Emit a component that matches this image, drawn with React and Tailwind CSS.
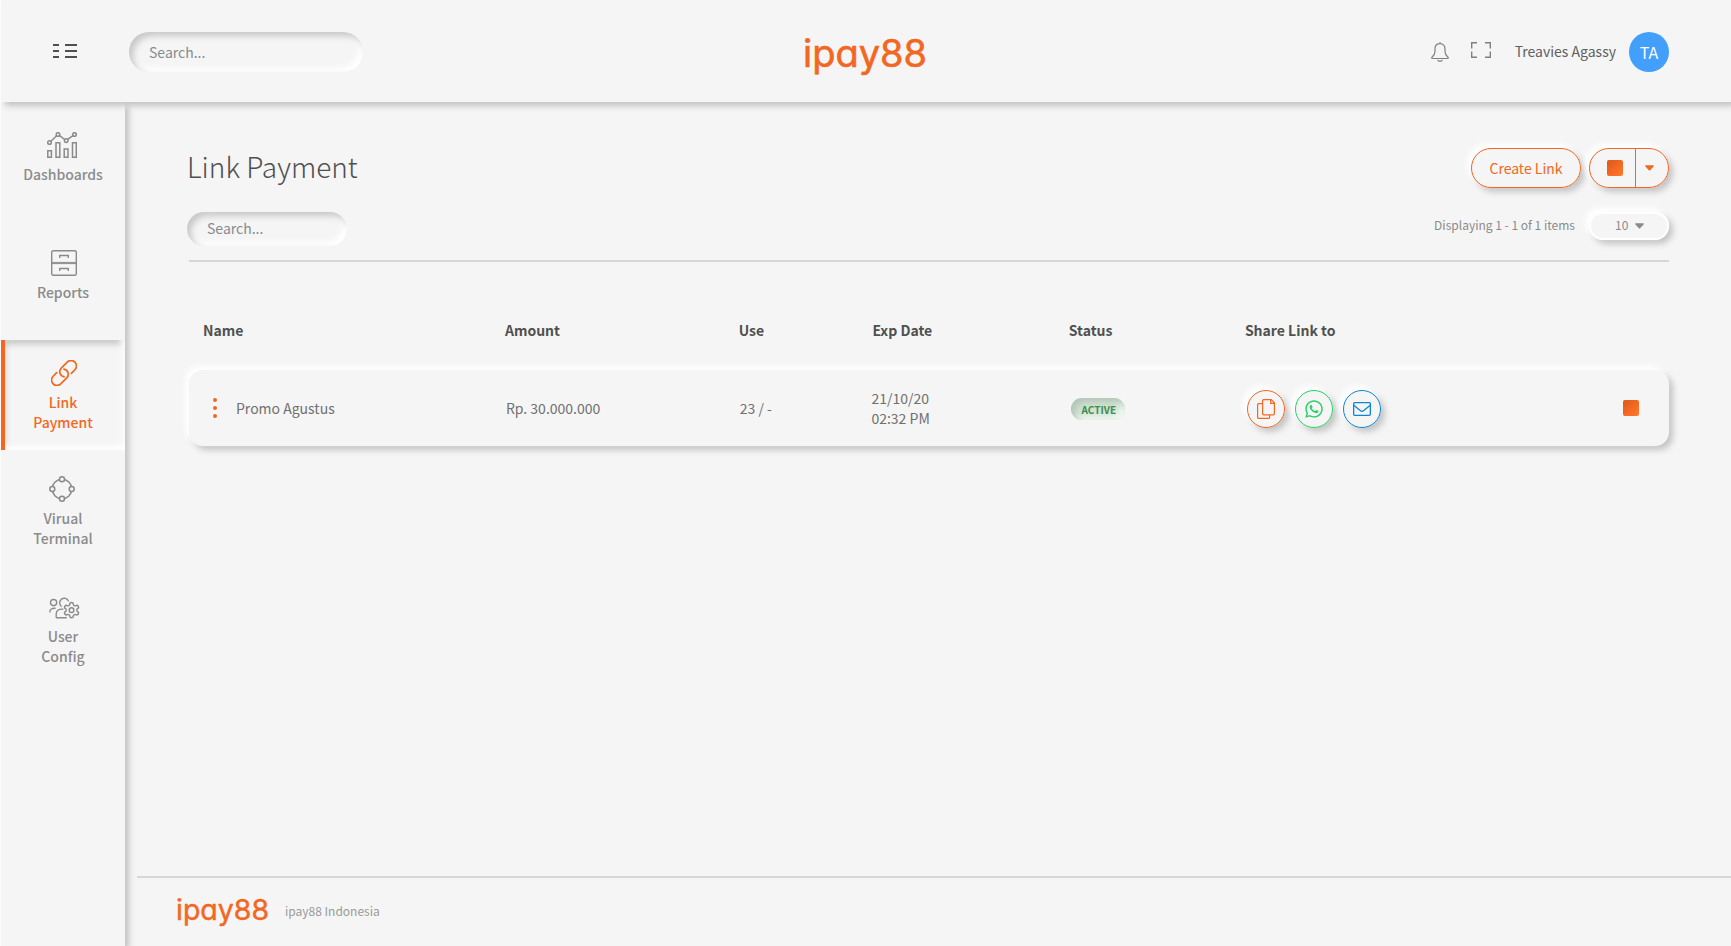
import { FaWhatsapp } from "react-icons/fa";

const navItems = [
  { label: "Dashboards", icon: DashboardIcon },
  { label: "Reports", icon: ReportsIcon },
  { label: "Link Payment", icon: LinkIcon, active: true },
  { label: "Virual Terminal", icon: TerminalIcon },
  { label: "User Config", icon: UserConfigIcon },
];

const payments = [
  { name: "Promo Agustus", amount: "Rp. 30.000.000", use: "23 / -", date: "21/10/20", time: "02:32 PM", status: "ACTIVE" },
];

const raised = "shadow-[-4px_-4px_6px_#ffffff,4px_4px_6px_#c4c4c4]";
const sunken = "shadow-[inset_4px_4px_6px_#c8c8c8,inset_-4px_-4px_6px_#ffffff]";

function DashboardIcon() {
  return (
    <svg className="mr-[2px]" width="30" height="26" viewBox="0 0 30 26" fill="none" stroke="currentColor" strokeWidth="1.5">
      <circle cx="2.5" cy="10.5" r="1.8" />
      <circle cx="11" cy="2.5" r="1.8" />
      <circle cx="19.2" cy="8.6" r="1.8" />
      <circle cx="27.5" cy="2.5" r="1.8" />
      <path d="M3.9 9.2l5.7-5.4M12.5 3.6l5.2 3.9M20.6 7.4l5.4-3.7" />
      <path d="M.8 18.7h3.6v6.6H.8zM9 10.7h3.8v14.6H9zM17.2 17h3.8v8.3h-3.8zM25.5 10.7h3.8v14.6h-3.8z" />
    </svg>
  );
}

function ReportsIcon() {
  return (
    <svg className="ml-[2px]" width="26" height="26" viewBox="0 0 26 26" fill="none" stroke="currentColor" strokeWidth="1.4">
      <rect x=".7" y=".7" width="24.6" height="24.6" rx="1.5" />
      <path d="M.7 12.4h24.6M.7 13.6h24.6" strokeWidth="1" />
      <path d="M8.7 8V5.5h8.6V8M8.7 21v-2.5h8.6V21" />
    </svg>
  );
}

function LinkIcon() {
  return (
    <svg className="ml-[2px]" width="26" height="26" viewBox="0 0 26 26" fill="none" stroke="currentColor" strokeWidth="1.7" strokeLinecap="round">
      <g transform="rotate(-45 13 13)">
        <path d="M8 7.6H3a5.4 5.4 0 0 0 0 10.8h8.5a5.2 5.2 0 0 0 4.2-8.2" />
        <path d="M18 18.4h5a5.4 5.4 0 0 0 0-10.8h-8.5a5.2 5.2 0 0 0-4.2 8.2" />
      </g>
    </svg>
  );
}

function TerminalIcon() {
  return (
    <svg className="mr-[2px]" width="26" height="26" viewBox="0 0 26 26" fill="none" stroke="currentColor" strokeWidth="1.5">
      <circle cx="13" cy="13" r="9.8" />
      <g fill="#f5f5f5">
        <circle cx="13" cy="3.3" r="2.5" />
        <circle cx="22.7" cy="13" r="2.5" />
        <circle cx="13" cy="22.7" r="2.5" />
        <circle cx="3.3" cy="13" r="2.5" />
      </g>
    </svg>
  );
}

function UserConfigIcon() {
  return (
    <svg className="ml-[2px]" width="31" height="26" viewBox="0 0 31 26" fill="none" stroke="currentColor" strokeWidth="1.4">
      <circle cx="4.6" cy="8.6" r="3.1" />
      <path d="M.8 18.5c0-3 1.5-4.4 5.8-4.2M12.6 12.6a4.6 4.6 0 1 1 7-5.2M7.2 23.8v-3.6c0-3.6 2-5.3 7.2-5M7.2 23.8h10.6" />
      <g transform="translate(13.3 6.9) scale(.77)" strokeWidth="1.9">
        <path d="M12.22 2h-.44a2 2 0 0 0-2 2v.18a2 2 0 0 1-1 1.73l-.43.25a2 2 0 0 1-2 0l-.15-.08a2 2 0 0 0-2.73.73l-.22.38a2 2 0 0 0 .73 2.73l.15.1a2 2 0 0 1 1 1.72v.51a2 2 0 0 1-1 1.74l-.15.09a2 2 0 0 0-.73 2.73l.22.38a2 2 0 0 0 2.73.73l.15-.08a2 2 0 0 1 2 0l.43.25a2 2 0 0 1 1 1.73V20a2 2 0 0 0 2 2h.44a2 2 0 0 0 2-2v-.18a2 2 0 0 1 1-1.73l.43-.25a2 2 0 0 1 2 0l.15.08a2 2 0 0 0 2.73-.73l.22-.39a2 2 0 0 0-.73-2.73l-.15-.08a2 2 0 0 1-1-1.74v-.5a2 2 0 0 1 1-1.74l.15-.09a2 2 0 0 0 .73-2.73l-.22-.38a2 2 0 0 0-2.73-.73l-.15.08a2 2 0 0 1-2 0l-.43-.25a2 2 0 0 1-1-1.73V4a2 2 0 0 0-2-2z" />
        <circle cx="12" cy="12" r="3" />
      </g>
    </svg>
  );
}

function MenuIcon() {
  return (
    <svg width="24" height="14" viewBox="0 0 24 14" fill="currentColor">
      <path d="M0 0h6v2H0zM12 0h12v2H12zM0 6h6v2H0zM12 6h12v2H12zM0 12h6v2H0zM12 12h12v2H12z" />
    </svg>
  );
}

function BellIcon() {
  return (
    <svg width="18" height="20" viewBox="0 0 18 20" fill="none" stroke="currentColor" strokeWidth="1.2" strokeLinecap="round">
      <path d="M9 .6v1M9 1.7C5.8 1.7 4 3.9 4 7v2.5c0 3-1.2 4.2-3 5.7-.6.6-.3 1.3.4 1.3h15.2c.7 0 1-.7.4-1.3-1.8-1.5-3-2.7-3-5.7V7c0-3.1-1.8-5.3-5-5.3zM6.8 18.3a2.3 1.5 0 0 0 4.4 0" />
    </svg>
  );
}

function ExpandIcon() {
  return (
    <svg width="20" height="16" viewBox="0 0 20 16" fill="none" stroke="currentColor" strokeWidth="1.4">
      <path d="M6 .7H.7v5.8M14 .7h5.3v5.8M6 15.3H.7V9.5M14 15.3h5.3V9.5" />
    </svg>
  );
}

function CopyIcon() {
  return (
    <svg width="18" height="20" viewBox="0 0 18 20" fill="none" stroke="currentColor" strokeWidth="1.2">
      <path d="M5.6 4.6h-4a1 1 0 0 0-1 1v12.8a1 1 0 0 0 1 1h10a1 1 0 0 0 1-1v-2.5" />
      <path d="M6.6.6h7.6l3.2 3.2v11a1 1 0 0 1-1 1H6.6a1 1 0 0 1-1-1V1.6a1 1 0 0 1 1-1z" />
      <path d="M13.7.8v3.5h3.6" />
    </svg>
  );
}

function MailIcon() {
  return (
    <svg width="18" height="14" viewBox="0 0 18 14" fill="none" stroke="currentColor" strokeWidth="1.3">
      <rect x=".65" y=".65" width="16.7" height="12.7" rx="1" />
      <path d="M.8 3.3l6.7 5.4a2.4 2.4 0 0 0 3 0l6.7-5.4" />
    </svg>
  );
}

function Caret() {
  return (
    <svg width="9" height="6" viewBox="0 0 9 6" fill="currentColor">
      <path d="M.8.3h7.4c.6 0 .8.7.4 1.1L5.1 5.3a.8.8 0 0 1-1.2 0L.4 1.4C0 1 .2.3.8.3z" />
    </svg>
  );
}

function Square() {
  return <span className="block size-4 rounded-[2px] bg-linear-to-br from-[#d85a1c] via-[#f26722] to-[#ff7a2e]" />;
}

function Logo({ small }) {
  return (
    <svg className={small ? "h-[42px] w-[99px]" : "h-14 w-[132px]"} viewBox="0 0 132 56" role="img" aria-label="ipay88">
      <text
        x="4"
        y="38"
        fill="#f26722"
        stroke="#f26722"
        strokeWidth=".6"
        strokeLinejoin="round"
        className="font-['Inter',sans-serif] text-[38px] font-normal [font-feature-settings:'cv11']"
      >
        ipay88
      </text>
    </svg>
  );
}

function Header() {
  return (
    <header className="z-10 grid h-[102px] grid-cols-[1fr_auto_1fr] items-center bg-[#f5f5f5] pr-[62px] pl-[52px] shadow-[4px_4px_6px_#c4c4c4]">
      <div className="flex items-center gap-[52px]">
        <button aria-label="Toggle menu" className="text-[#505050]">
          <MenuIcon />
        </button>
        <input
          type="search"
          aria-label="Search"
          placeholder="Search..."
          className={`mt-[2px] h-10 w-[234px] rounded-full px-5 outline-none placeholder:text-[#868b90] ${sunken}`}
        />
      </div>
      <a href="#home" className="mt-3 ml-2">
        <Logo />
      </a>
      <div className="flex items-center justify-end pt-[2px] text-[#808080]">
        <button aria-label="Notifications" className="mr-[22px]">
          <BellIcon />
        </button>
        <button aria-label="Full screen" className="mr-6 pb-1">
          <ExpandIcon />
        </button>
        <button className="flex items-center gap-[13px] text-[#606060]">
          <span className="pb-[2px]">Treavies Agassy</span>
          <span className="flex size-10 items-center justify-center rounded-full bg-[#429ffb] text-base text-white">TA</span>
        </button>
      </div>
    </header>
  );
}

function SideBar() {
  return (
    <nav className="flex w-[124px] shrink-0 flex-col gap-2 bg-[#f5f5f5] pt-[2px] shadow-[4px_4px_6px_#c4c4c4]">
      {navItems.map(({ label, icon: Icon, active }) => (
        <a
          key={label}
          href={`#${label}`}
          className={`flex h-[110px] flex-col items-center justify-center gap-[6px] text-center font-medium ${
            active
              ? "border-l-4 border-[#f26722] pt-[2px] pr-1 text-[#f26722] shadow-[inset_-4px_-4px_6px_#ffffff,inset_0_4px_6px_#c4c4c4]"
              : "pb-[2px] text-[#8b8b8b]"
          }`}
        >
          <Icon />
          <span className="w-min">{label}</span>
        </a>
      ))}
    </nav>
  );
}

function ShareButton({ label, color, children }) {
  return (
    <button aria-label={label} className={`flex size-[38px] items-center justify-center rounded-full border ${color} ${raised}`}>
      {children}
    </button>
  );
}

function PaymentTable() {
  return (
    <table className="ml-[2px] w-[calc(100%-2px)] table-fixed border-separate border-spacing-0 text-left">
      <thead className="text-[#505050]">
        <tr className="h-[108px]">
          <th className="w-[20.4%] px-[14px] pt-7 font-bold">Name</th>
          <th className="w-[15.8%] px-[14px] pt-7 font-bold">Amount</th>
          <th className="w-[9.1%] px-[14px] pt-7 font-bold">Use</th>
          <th className="w-[13.2%] px-[13px] pt-7 font-bold">Exp Date</th>
          <th className="w-[11.9%] px-[14px] pt-7 font-bold">Status</th>
          <th className="px-[14px] pt-7 font-bold">Share Link to</th>
        </tr>
      </thead>
      <tbody className="text-[#707070]">
        {payments.map((item) => (
          <tr key={item.name} className={`h-[76px] rounded-[14px] ${raised}`}>
            <td className="px-[14px]">
              <div className="flex items-center gap-[9px]">
                <button aria-label="Row actions" className="flex w-6 flex-col items-center gap-1">
                  <span className="size-1 rounded-full bg-[#f26722]" />
                  <span className="size-1 rounded-full bg-[#f26722]" />
                  <span className="size-1 rounded-full bg-[#f26722]" />
                </button>
                {item.name}
              </div>
            </td>
            <td className="px-[15px]">{item.amount}</td>
            <td className="px-[15px]">{item.use}</td>
            <td className="px-3">
              {item.date}
              <br />
              {item.time}
            </td>
            <td className="px-4 pt-[2px]">
              <span className="flex h-[22px] w-[54px] items-center justify-center rounded-full bg-[#cfe3d3] pt-[2px] pl-[2px] text-[10px] font-bold text-[#3f8b50] shadow-[inset_4px_4px_6px_#b4c6b8,inset_-4px_-4px_6px_#f2f8f3]">
                {item.status}
              </span>
            </td>
            <td className="px-4 pt-[2px]">
              <div className="flex items-center gap-[10px]">
                <ShareButton label="Copy link" color="border-[#f26722] text-[#f26722]">
                  <CopyIcon />
                </ShareButton>
                <ShareButton label="Share on WhatsApp" color="border-[#25d366] text-[#25d366]">
                  <FaWhatsapp className="size-5" />
                </ShareButton>
                <ShareButton label="Share by mail" color="border-[#0e86d0] text-[#0e86d0]">
                  <MailIcon />
                </ShareButton>
                <button aria-label="Select row" className="mr-[14px] ml-auto pb-[2px]">
                  <Square />
                </button>
              </div>
            </td>
          </tr>
        ))}
      </tbody>
    </table>
  );
}

function App() {
  return (
    <div className="flex min-h-screen flex-col border-l border-white bg-[#f5f5f5] font-['Noto_Sans_CJK_SC',sans-serif] text-sm leading-5">
      <Header />
      <div className="flex flex-1">
        <SideBar />
        <div className="flex flex-1 flex-col">
          <main className="flex-1 pt-[46px] pr-[62px] pl-[62px]">
            <div className="flex items-start justify-between">
              <h1 className="text-[28px] leading-9 font-light text-[#505050]">Link Payment</h1>
              <div className="flex gap-2">
                <button className={`h-10 w-[110px] rounded-full border border-[#f26722] text-[#f26722] ${raised}`}>Create Link</button>
                <div className={`flex h-10 w-20 rounded-full border border-[#f26722] text-[#f26722] ${raised}`}>
                  <button aria-label="Select all" className="flex flex-1 items-center justify-end border-r border-[#f26722] pr-3">
                    <Square />
                  </button>
                  <button aria-label="More actions" className="flex w-8 items-center pl-[9px]">
                    <Caret />
                  </button>
                </div>
              </div>
            </div>
            <div className="mt-6 flex items-start justify-between">
              <input
                type="search"
                aria-label="Search links"
                placeholder="Search..."
                className={`h-[34px] w-40 rounded-full px-5 pb-[2px] outline-none placeholder:text-[#868b90] ${sunken}`}
              />
              <div className="flex items-center gap-[14px] text-xs text-[#8b8b8b]">
                <label htmlFor="page-size" className="pb-[2px]">Displaying 1 - 1 of 1 items</label>
                <div className="relative flex items-center">
                  <select
                    id="page-size"
                    className={`h-7 w-20 appearance-none rounded-full border-2 border-white pb-[2px] pl-6 outline-none ${raised}`}
                  >
                    <option>10</option>
                    <option>20</option>
                  </select>
                  <span className="pointer-events-none absolute right-[25px]">
                    <Caret />
                  </span>
                </div>
              </div>
            </div>
            <hr className="mt-[14px] ml-[2px] border-t-2 border-[#d7d7d7]" />
            <PaymentTable />
          </main>
          <footer className="ml-3 flex h-[70px] items-center gap-[13px] border-t-2 border-[#d7d7d7] pl-9 text-xs text-[#9a9a9a]">
            <Logo small />
            <span className="pb-[2px]">ipay88 Indonesia</span>
          </footer>
        </div>
      </div>
    </div>
  );
}

export default App;
